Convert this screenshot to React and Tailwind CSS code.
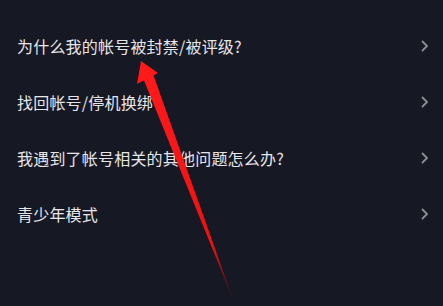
const items = [
  '为什么我的帐号被封禁/被评级?',
  '找回帐号/停机换绑',
  '我遇到了帐号相关的其他问题怎么办?',
  '青少年模式',
];

const Chevron = () => (
  <svg width="8" height="12" viewBox="0 0 8 12" fill="none">
    <path d="M1.5 1.5 L6 6 L1.5 10.5" stroke="#8b8c93" strokeWidth="1.8" strokeLinecap="round" strokeLinejoin="round" />
  </svg>
);

export default function App() {
  return (
    <div
      className="relative w-[443px] h-[306px] overflow-hidden bg-[#161823]"
      style={{ fontFamily: '"Noto Sans CJK SC", "Noto Sans", sans-serif' }}
    >
      <ul className="pt-[18px]">
        {items.map((t) => (
          <li key={t} className="h-[56px] flex items-center justify-between pl-[17px] pr-[14px]">
            <span className="text-[16px] text-[#e6e6e9] tracking-[0.2px]">{t}</span>
            <Chevron />
          </li>
        ))}
      </ul>

      {/* red annotation arrow */}
      <svg className="absolute left-0 top-0 pointer-events-none" width="443" height="306" viewBox="0 0 443 306">
        <defs>
          <linearGradient id="fade" x1="148" y1="78" x2="234" y2="302" gradientUnits="userSpaceOnUse">
            <stop offset="0" stopColor="#ff1a1a" />
            <stop offset="0.75" stopColor="#f01010" />
            <stop offset="1" stopColor="#7a0a14" stopOpacity="0.4" />
          </linearGradient>
        </defs>
        <polygon points="141,61 137,84 158,73" fill="#ff1a1a" />
        <polygon points="143,78 153,74 234,302" fill="url(#fade)" />
      </svg>
    </div>
  );
}
